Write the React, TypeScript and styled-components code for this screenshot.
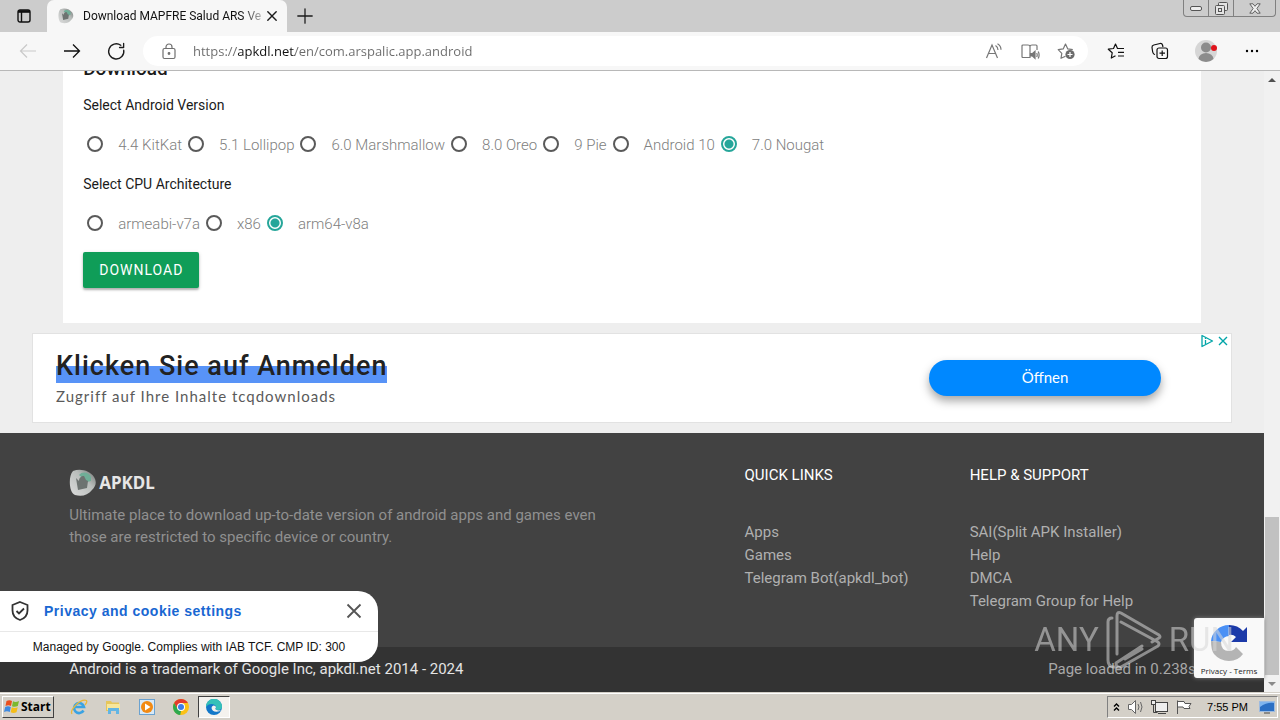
import React from "react";
import styled, { createGlobalStyle, css } from "styled-components";

const GlobalStyle = createGlobalStyle`
  *, *::before, *::after { box-sizing: border-box; }
  body { margin: 0; background: #eeeeee; font-family: Roboto, "Liberation Sans", sans-serif; font-size: 15px; }
  button, input { font-family: inherit; }
  a { color: inherit; text-decoration: none; }
  svg { flex: none; }
`;

const Desktop = styled.div`
  display: flex;
  flex-direction: column;
  height: 100vh;
  overflow: hidden;
`;

/* ---------- browser chrome ---------- */
const TitleBar = styled.header`
  display: flex;
  align-items: stretch;
  height: 32px;
  flex: none;
  background: #cccccc;
`;

const IconButton = styled.button<{ $w?: number }>`
  display: flex;
  align-items: center;
  justify-content: center;
  flex: none;
  width: ${(p) => p.$w ?? 32}px;
  padding: 0;
  border: 0;
  background: none;
  color: #1b1b1b;
`;

const Tab = styled.div`
  display: flex;
  align-items: center;
  width: 240px;
  padding: 0 6px 0 11px;
  border-radius: 7px 7px 0 0;
  background: #f7f7f7;
`;

const TabTitle = styled.span`
  flex: 1;
  margin-left: 9px;
  white-space: nowrap;
  font: 12px/16px Roboto, sans-serif;
  color: #111;
  mask-image: linear-gradient(to right, #000 88%, transparent 104%);
`;

const WindowButtons = styled.div`
  display: flex;
  align-self: flex-start;
  height: 17px;
  margin: 0 4px 0 auto;
  border: 1px solid #808080;
  border-top: 0;
  border-radius: 0 0 4px 4px;
  button + button { border-left: 1px solid #808080; }
`;

const Toolbar = styled.nav`
  display: flex;
  align-items: center;
  height: 39px;
  flex: none;
  padding: 0 6px;
  border-bottom: 1px solid #b8b8b8;
  background: #f7f7f7;
`;

const AddressBar = styled.form`
  display: flex;
  align-items: center;
  flex: 1;
  height: 30px;
  margin: 0 6px 0 5px;
  padding: 0 4px 0 9px;
  border-radius: 15px;
  background: #fff;
`;

const AddressInput = styled.input`
  flex: 1;
  min-width: 0;
  padding: 0;
  margin-left: 7px;
  border: 0;
  outline: 0;
  font: 13px/20px "Open Sans", sans-serif;
  color: #666;
  background: linear-gradient(to right, #6b6b6b 45px, #111 45px, #111 102px, #6b6b6b 102px);
  background-clip: text;
  -webkit-text-fill-color: transparent;
`;

/* ---------- page ---------- */
const Viewport = styled.div`
  position: relative;
  display: flex;
  flex: 1;
  min-height: 0;
`;

const Page = styled.div`
  display: flex;
  flex-direction: column;
  justify-content: flex-end;
  flex: 1;
  min-width: 0;
  overflow: hidden;
  background: #eeeeee;
`;

const Card = styled.main`
  width: 90%;
  flex: none;
  margin: 0 auto 10px;
  padding: 20px 20px 35px;
  background: #fff;
`;

const Heading = styled.h2`
  margin: 0 0 13px;
  font-size: 19px;
  line-height: 24px;
  font-weight: 500;
  color: #1b1b1b;
`;

const Group = styled.fieldset`
  margin: 0;
  padding: 0;
  border: 0;
`;

const Legend = styled.legend`
  padding: 0;
  font-size: 14px;
  line-height: 22px;
  color: #1b1b1b;
`;

const Options = styled.div`
  display: flex;
  flex-wrap: wrap;
  gap: 2px;
  padding: 16px 0 14px;
`;

const Option = styled.label`
  display: flex;
  align-items: flex-start;
  gap: 15px;
  padding-left: 4px;
  line-height: 27px;
  font-size: 15px;
  font-weight: 300;
  color: #808080;
`;

const Radio = styled.input`
  appearance: none;
  flex: none;
  width: 16px;
  height: 16px;
  margin: 4px 0 0;
  border: 2px solid #5a5a5a;
  border-radius: 50%;
  background: #fff;
  &:checked {
    border-color: #26a69a;
    background: radial-gradient(circle, #26a69a 4px, #fff 5px);
  }
`;

const DownloadButton = styled.button`
  display: block;
  height: 36px;
  padding: 0 16px;
  border: 0;
  border-radius: 2px;
  background: #0f9d58;
  box-shadow: 0 2px 2px rgba(0, 0, 0, 0.24), 0 1px 4px rgba(0, 0, 0, 0.14);
  color: #fff;
  font-size: 14px;
  letter-spacing: 1px;
`;

const Ad = styled.aside`
  position: relative;
  display: flex;
  align-items: center;
  justify-content: space-between;
  flex: none;
  width: 95%;
  max-width: 1200px;
  height: 90px;
  margin: 0 auto 10px;
  padding: 0 70px 0 23px;
  border: 1px solid #e2e2e2;
  background: #fff;
`;

const AdTitle = styled.a`
  display: block;
  width: fit-content;
  height: 34px;
  font-size: 27px;
  line-height: 34px;
  font-weight: 500;
  letter-spacing: 1px;
  color: #222;
  background: linear-gradient(transparent 17px, #5893f7 17px);
`;

const AdText = styled.p`
  margin: 2px 0 0;
  padding-bottom: 1px;
  font: 15px/22px Lato, sans-serif;
  letter-spacing: 1px;
  color: #5a5a5a;
`;

const AdButton = styled.button`
  width: 232px;
  height: 36px;
  padding: 0 0 2px;
  border: 0;
  border-radius: 18px;
  background: #0088ff;
  box-shadow: 0 5px 10px rgba(0, 0, 0, 0.35);
  color: #fff;
  font: 15px/20px Lato, sans-serif;
`;

const AdChoices = styled.div`
  position: absolute;
  top: 0;
  right: 0;
  display: flex;
`;

const Footer = styled.footer`
  flex: none;
  background: #424242;
  color: #b0b0b0;
`;

const FooterGrid = styled.div`
  display: grid;
  grid-template-columns: 3fr 1fr 1fr;
  width: 90%;
  margin: 0 auto;
  padding: 31px 6px 34px;
`;

const Logo = styled.div`
  display: flex;
  align-items: center;
  gap: 2px;
  margin-top: 5px;
  color: #e6e6e6;
  font: 700 17px/28px "Noto Sans", sans-serif;
`;

const Tagline = styled.p`
  max-width: 540px;
  margin: 7px 0 0;
  line-height: 22px;
  color: #909090;
`;

const FooterHeading = styled.h5`
  margin: 0 0 34px;
  font-size: 15px;
  line-height: 23px;
  font-weight: 400;
  color: #fff;
`;

const LinkList = styled.ul`
  margin: 0;
  padding: 0;
  list-style: none;
  line-height: 23px;
  white-space: nowrap;
`;

const Copyright = styled.div`
  background: #333333;
  color: #e4e4e4;
`;

const CopyrightRow = styled.div`
  display: flex;
  justify-content: space-between;
  width: 90%;
  margin: 0 auto;
  padding: 11px 5px 12px 6px;
  line-height: 22px;
  span + span { color: #a8a8a8; }
`;

const Scrollbar = styled.div`
  display: flex;
  flex-direction: column;
  flex: none;
  width: 16px;
  background: #f1f1f1;
`;

const ScrollTrack = styled.div`
  display: flex;
  flex-direction: column;
  justify-content: flex-end;
  flex: 1;
`;

const ScrollThumb = styled.div`
  height: 27%;
  margin: 0 1px;
  background: #c1c1c1;
`;

/* ---------- overlays ---------- */
const CookiePanel = styled.section`
  position: absolute;
  left: 0;
  bottom: 30px;
  width: 378px;
  border-radius: 0 20px 20px 0;
  background: #fff;
  color: #111;
`;

const CookieHead = styled.div`
  display: flex;
  align-items: center;
  gap: 14px;
  height: 41px;
  padding: 0 8px 0 10px;
  border-bottom: 1px solid #e8e8e8;
  a { flex: 1; font: 700 14px/20px "Liberation Sans", sans-serif; letter-spacing: 0.5px; color: #1967d2; }
`;

const CookieNote = styled.p`
  margin: 0;
  text-align: center;
  font: 12px/30px "Liberation Sans", sans-serif;
`;

const Captcha = styled.div`
  position: absolute;
  right: 16px;
  bottom: 14px;
  display: flex;
  flex-direction: column;
  align-items: center;
  width: 70px;
  height: 60px;
  padding-top: 5px;
  border-radius: 3px 0 0 3px;
  background: #f9f9f9;
  box-shadow: 0 0 4px #808080;
  color: #222;
  font: 8px/16px "Open Sans", sans-serif;
  white-space: nowrap;
`;

const Watermark = styled.div`
  position: absolute;
  right: 46px;
  bottom: 22px;
  display: flex;
  align-items: center;
  gap: 7px;
  opacity: 0.55;
  color: #d8d8d8;
  font: 33px/60px Roboto, sans-serif;
`;

/* ---------- taskbar ---------- */
const Taskbar = styled.footer`
  display: flex;
  align-items: center;
  flex: none;
  height: 28px;
  padding: 0 2px;
  border-top: 1px solid #d4d0c8;
  box-shadow: inset 0 1px #fff;
  background: #d4d0c8;
`;

const raised = css`
  border: 1px solid;
  border-color: #fff #404040 #404040 #fff;
`;
const sunken = css`
  border: 1px solid;
  border-color: #808080 #fff #fff #808080;
`;

const StartButton = styled.button`
  ${raised}
  display: flex;
  align-items: center;
  gap: 1px;
  width: 52px;
  height: 22px;
  margin-right: 8px;
  padding: 0 1px;
  background: #d4d0c8;
  color: #000;
  font: 700 12px/16px "Open Sans", sans-serif;
`;

const Launcher = styled.button<{ $active?: boolean }>`
  display: flex;
  align-items: center;
  justify-content: center;
  width: 34px;
  height: 22px;
  padding: 0;
  border: 0;
  background: none;
  ${(p) => p.$active && css`${sunken} width: 32px; background: #f4f2ee; border-color: #404040 #fff #fff #404040;`}
`;

const Tray = styled.div`
  ${sunken}
  display: flex;
  align-items: center;
  gap: 6px;
  height: 22px;
  margin-left: auto;
  padding: 0 2px 0 4px;
  color: #000;
  font: 11px/16px "Liberation Sans", sans-serif;
  time { margin: 0 5px 0 8px; }
`;

const versions = ["4.4 KitKat", "5.1 Lollipop", "6.0 Marshmallow", "8.0 Oreo", "9 Pie", "Android 10", "7.0 Nougat"];
const archs = ["armeabi-v7a", "x86", "arm64-v8a"];

const Line = ({ size = 20, w = 1.2, children }: { size?: number; w?: number; children: React.ReactNode }) => (
  <svg width={size} height={size} viewBox="0 0 20 20" fill="none" stroke="currentColor" strokeWidth={w} strokeLinecap="round" strokeLinejoin="round" aria-hidden>
    {children}
  </svg>
);

const AppMark = ({ size }: { size: number }) => (
  <svg width={size} height={size} viewBox="0 0 28 28" aria-hidden>
    <defs>
      <linearGradient id="mark" x1="0" y1="1" x2="1" y2="0">
        <stop offset="0" stopColor="#dcdcdc" />
        <stop offset="0.6" stopColor="#b9bdbb" />
        <stop offset="1" stopColor="#6f7472" />
      </linearGradient>
    </defs>
    <path d="M4 2 C12-1 21 2 25 8 C28 13 27 17 23 21 C19 26 13 28 6 26 C0 24-1 7 4 2Z" fill="url(#mark)" />
    <path d="M10 6 C13 2 20 3 22 8 L22 12 L18 13 Z" fill="#6fae97" />
    <path d="M7 9 L10 12 C10 9 12 7 15 7 L17 11 L19 12 L18 19 L9 21 Z" fill="#6d7371" />
  </svg>
);

const RadioRow = ({ name, items, picked }: { name: string; items: string[]; picked: string }) => (
  <Options>
    {items.map((t) => (
      <Option key={t}>
        <Radio type="radio" name={name} value={t} defaultChecked={t === picked} />
        {t}
      </Option>
    ))}
  </Options>
);

const LinkColumn = ({ title, links }: { title: string; links: string[] }) => (
  <div>
    <FooterHeading>{title}</FooterHeading>
    <LinkList>
      {links.map((l) => (
        <li key={l}><a href="#">{l}</a></li>
      ))}
    </LinkList>
  </div>
);

const BrowserChrome = () => (
  <>
    <TitleBar>
      <IconButton $w={47} aria-label="Tab actions">
        <svg width="14" height="14" viewBox="0 0 14 14"><rect x="1" y="1" width="12" height="12" rx="2" fill="none" stroke="#111" strokeWidth="1.4" /><path d="M1 2.500h12" stroke="#111" strokeWidth="2.600" /><path d="M4.500 3v10" stroke="#111" strokeWidth="1.400" /></svg>
      </IconButton>
      <Tab>
        <AppMark size={16} />
        <TabTitle>Download MAPFRE Salud ARS Ve</TabTitle>
        <IconButton $w={18} aria-label="Close tab"><Line size={14} w={2}><path d="M4 4l12 12M16 4L4 16" /></Line></IconButton>
      </Tab>
      <IconButton $w={36} aria-label="New tab"><Line size={16} w={1.6}><path d="M10 1v18M1 10h18" /></Line></IconButton>
      <WindowButtons>
        <IconButton $w={24} aria-label="Minimize"><svg width="12" height="5"><rect x=".5" y=".5" width="11" height="4" rx="1.5" fill="#eee" stroke="#555" /></svg></IconButton>
        <IconButton $w={25} aria-label="Restore"><svg width="13" height="13" fill="#e4e4e4" stroke="#555"><rect x="3.5" y=".5" width="9" height="8" rx="1" /><rect x=".5" y="3.500" width="9" height="9" rx="1" /><rect x="3.500" y="6.500" width="3" height="3" /></svg></IconButton>
        <IconButton $w={42} aria-label="Close"><svg width="12" height="11" viewBox="0 0 12 11" fill="#eee" stroke="#555" strokeWidth=".9"><path d="M.8.8H4L6 3.300 8 .8h3.200L7.900 5.500l3.300 4.700H8L6 7.700 4 10.200H.8L4.100 5.500Z" /></svg></IconButton>
      </WindowButtons>
    </TitleBar>
    <Toolbar aria-label="Browser">
      <IconButton $w={44} aria-label="Back"><svg width="18" height="16" fill="none" stroke="#c9c9c9" strokeWidth="1.200"><path d="M17 8H1.500M8 1.500L1.500 8L8 14.500" /></svg></IconButton>
      <IconButton $w={44} aria-label="Forward"><svg width="18" height="16" fill="none" stroke="#111" strokeWidth="1.300"><path d="M1 8h15.500M10 1.500L16.500 8L10 14.500" /></svg></IconButton>
      <IconButton $w={44} aria-label="Refresh"><Line size={19} w={1.4}><path d="M17.600 8.500A8 8 0 1 1 14.500 3.500M17.500 1.500v4.300h-4.300" /></Line></IconButton>
      <AddressBar onSubmit={(e) => e.preventDefault()}>
        <IconButton type="button" $w={34} aria-label="Site information">
          <svg width="14" height="17" fill="none" stroke="#707070" strokeWidth="1.200"><rect x="1" y="5.500" width="12" height="10" rx="1.500" /><path d="M4 5.500V4a3 3 0 0 1 6 0v1.500" /><circle cx="7" cy="10.500" r=".8" fill="#707070" /></svg>
        </IconButton>
        <AddressInput aria-label="Address" defaultValue="https://apkdl.net/en/com.arspalic.app.android" />
        <IconButton type="button" $w={36} aria-label="Read aloud">
          <svg width="18" height="17" fill="none" stroke="#777" strokeWidth="1.200"><path d="M1.500 15L7 2l5.500 13M3.500 10.500h7M10.500 2.500q2.500 1.500 2.500 4.500M12.500 .8q3.500 2 3.500 6" /></svg>
        </IconButton>
        <IconButton type="button" $w={36} aria-label="Immersive reader">
          <svg width="19" height="17" fill="none" stroke="#777" strokeWidth="1.200"><path d="M9 3v11.500H2q-1 0-1-1V3q0-1 1-1h5q2 0 2 1.500Q9 2 11 2h4q1 0 1 1v4" /><path d="M9.500 10.500h2l2.500-2.200v7L11.500 13h-2z" fill="#777" /><path d="M15.700 10q1 2 0 4M17.200 8.500q1.800 3.300 0 7" /></svg>
        </IconButton>
        <IconButton type="button" $w={36} aria-label="Add to favorites">
          <svg width="19" height="18" fill="none" stroke="#777" strokeWidth="1.200" strokeLinejoin="round"><path d="M8.500 14.200L4 16.300l.8-5L1.200 7.700l5-.8L8.500 2l2.300 4.900 5 .8" /><circle cx="13" cy="12.500" r="4.600" fill="#6b6b6b" stroke="none" /><path d="M13 10v5M10.500 12.500h5" stroke="#fff" /></svg>
        </IconButton>
      </AddressBar>
      <IconButton $w={44} aria-label="Favorites"><svg width="18" height="18" fill="none" stroke="#111" strokeWidth="1.200" strokeLinejoin="round"><path d="M8.500 13.800L4.300 16l.9-5.200L1.300 7.200l5.200-.7L8.500 2l2 4.500H17M11 10.300h6M11 14h6" /></svg></IconButton>
      <IconButton $w={44} aria-label="Collections"><svg width="18" height="18" fill="none" stroke="#111" strokeWidth="1.200"><path d="M4 12.500l-.8-.3Q2 11.500 1.700 10L1 5.500Q.8 3.500 2.800 3L9 1.500q2-.3 2.500 1.500l.5 2" /><rect x="6" y="6" width="10.500" height="10.500" rx="2" /><path d="M11.200 8.500v5.500M8.500 11.200H14" /></svg></IconButton>
      <IconButton $w={48} aria-label="Profile"><svg width="22" height="24"><circle cx="11" cy="12" r="11" fill="#d6d6d6" /><circle cx="11" cy="8.500" r="5" fill="#8c8c8c" /><path d="M3.500 20a7.500 6 0 0 1 15 0A11 11 0 0 1 3.500 20Z" fill="#8c8c8c" /><circle cx="19" cy="9" r="3" fill="#e0141c" /></svg></IconButton>
      <IconButton $w={44} aria-label="Menu"><svg width="14" height="4"><circle cx="2" cy="2" r="1.200" /><circle cx="7" cy="2" r="1.200" /><circle cx="12" cy="2" r="1.200" /></svg></IconButton>
    </Toolbar>
  </>
);

export default function App() {
  return (
    <Desktop>
      <GlobalStyle />
      <BrowserChrome />
      <Viewport>
        <Page>
          <Card>
            <Heading>Download</Heading>
            <Group>
              <Legend>Select Android Version</Legend>
              <RadioRow name="version" items={versions} picked="7.0 Nougat" />
            </Group>
            <Group>
              <Legend>Select CPU Architecture</Legend>
              <RadioRow name="arch" items={archs} picked="arm64-v8a" />
            </Group>
            <DownloadButton>DOWNLOAD</DownloadButton>
          </Card>
          <Ad>
            <div>
              <AdTitle href="#">Klicken Sie auf Anmelden</AdTitle>
              <AdText>Zugriff auf Ihre Inhalte tcqdownloads</AdText>
            </div>
            <AdButton>Öffnen</AdButton>
            <AdChoices>
              <IconButton $w={16} aria-label="Ad information"><svg width="14" height="14" fill="none" stroke="#00a5a8" strokeWidth="1.300" strokeLinejoin="round"><path d="M2 1.500v11L12.500 7Z" /><path d="M5.500 4v1M5.500 6v4" /></svg></IconButton>
              <IconButton $w={16} aria-label="Close ad"><svg width="10" height="14" stroke="#00a5a8" strokeWidth="1.400"><path d="M1 3l8 8M9 3l-8 8" /></svg></IconButton>
            </AdChoices>
          </Ad>
          <Footer>
            <FooterGrid>
              <div>
                <Logo><AppMark size={28} />APKDL</Logo>
                <Tagline>Ultimate place to download up-to-date version of android apps and games even those are restricted to specific device or country.</Tagline>
              </div>
              <LinkColumn title="QUICK LINKS" links={["Apps", "Games", "Telegram Bot(apkdl_bot)"]} />
              <LinkColumn title="HELP & SUPPORT" links={["SAI(Split APK Installer)", "Help", "DMCA", "Telegram Group for Help"]} />
            </FooterGrid>
            <Copyright>
              <CopyrightRow>
                <span>Android is a trademark of Google Inc, apkdl.net 2014 - 2024</span>
                <span>Page loaded in 0.238s</span>
              </CopyrightRow>
            </Copyright>
          </Footer>
        </Page>
        <Scrollbar>
          <svg width="16" height="17"><path d="M4 11l4-4 4 4z" fill="#505050" /></svg>
          <ScrollTrack><ScrollThumb /></ScrollTrack>
          <svg width="16" height="17"><path d="M4 7l4 4 4-4z" fill="#8a8a8a" /></svg>
        </Scrollbar>
        <CookiePanel>
          <CookieHead>
            <svg width="20" height="22" fill="none" stroke="#333" strokeWidth="1.800"><path d="M10 2l7.500 3v5.500c0 4.500-3 8-7.500 9.500-4.500-1.500-7.500-5-7.500-9.500V5Z" /><path d="M6.500 11l2.500 2.500 5-5" /></svg>
            <a href="#">Privacy and cookie settings</a>
            <IconButton $w={32} aria-label="Close"><svg width="16" height="16" stroke="#555" strokeWidth="1.800"><path d="M1.500 1.500l13 13M14.500 1.500l-13 13" /></svg></IconButton>
          </CookieHead>
          <CookieNote>Managed by Google. Complies with IAB TCF. CMP ID: 300</CookieNote>
        </CookiePanel>
        <Captcha>
          <svg width="40" height="40" viewBox="0 0 40 40">
            <path d="M20 2A18 18 0 0 0 2 18L12 19a9 9 0 0 1 8-6Z" fill="#4a90f5" />
            <path d="M20 2q9 0 14 6l4-4v15H22l5-5q-3-3-7-2Z" fill="#1c3aa9" />
            <path d="M2 18L12 19q0 9 8 9 5 0 7-4l7 7q-5 7-14 7T5 31Q2 27 2 18Z" fill="#b4b4b4" />
          </svg>
          <div><a href="#">Privacy</a> - <a href="#">Terms</a></div>
        </Captcha>
        <Watermark>
          <span>ANY</span>
          <svg width="56" height="60" fill="none" stroke="#d8d8d8" strokeWidth="3" strokeLinejoin="round" strokeLinecap="round"><path d="M6 8q-4 0-4 4v38q0 6 5 7l4 0" /><path d="M11 44V6q0-5 4-3l38 22q2 2 0 3l-7 4M15 12l37 20q2 2 0 4L15 57q-5 1-5-4l26-17M19 49l17-10" /></svg>
          <span>RUN</span>
        </Watermark>
      </Viewport>
      <Taskbar>
        <StartButton>
          <svg width="16" height="15" viewBox="0 0 16 15"><path d="M2.500 2q3-1.500 5.500 0L7 7Q4.500 5.500 1.500 7Z" fill="#ea4f1d" /><path d="M9 2.300q2.500 1.300 6-.3l-1.200 5Q11 8.500 8 7.300Z" fill="#7cb82f" /><path d="M1.200 8Q4 6.700 6.800 8l-1 5Q3 11.700 0 13Z" fill="#3f8ae0" /><path d="M7.800 8.300q3 1.300 5.900-.1l-1.200 5q-3 1.500-5.800.1Z" fill="#f5bd18" /></svg>
          Start
        </StartButton>
        <Launcher aria-label="Internet Explorer">
          <svg width="18" height="18" fill="none"><path d="M13.500 12.500A5 5 0 1 1 14 9H5" stroke="#3aa3e3" strokeWidth="2.600" /><path d="M2 16Q0 13 6 7T16.500 2.500Q17.500 4 15 7" stroke="#e9b83a" strokeWidth="1.300" /></svg>
        </Launcher>
        <Launcher aria-label="Explorer">
          <svg width="18" height="18"><path d="M2 3h5l1 1.500h7V13H2Z" fill="#e6c65c" /><path d="M3 6h13v6H3Z" fill="#f7e69b" /><path d="M4 10h11v6h-3v-3H7v3H4Z" fill="#62b5e4" /></svg>
        </Launcher>
        <Launcher aria-label="Media Player">
          <svg width="18" height="18"><rect x="1.500" y="1.500" width="15" height="15" fill="#d8e9f7" stroke="#6ba2d0" /><circle cx="9" cy="9" r="6" fill="#f28a13" /><path d="M7 5.500L12.500 9 7 12.500Z" fill="#fff" /></svg>
        </Launcher>
        <Launcher aria-label="Chrome">
          <svg width="16" height="16" viewBox="0 0 16 16"><circle cx="8" cy="8" r="8" fill="#fbc116" /><path d="M1.100 4A8 8 0 0 1 14.900 4H8L4.500 10Z" fill="#e33b2e" /><path d="M1.100 4L4.600 10 8 12 7.200 16A8 8 0 0 1 1.100 4Z" fill="#2da94f" /><circle cx="8" cy="8" r="4" fill="#fff" /><circle cx="8" cy="8" r="3" fill="#3d7de8" /></svg>
        </Launcher>
        <Launcher $active aria-label="Edge">
          <svg width="16" height="16" viewBox="0 0 16 16"><circle cx="8" cy="8" r="8" fill="#1277c9" /><path d="M0 8A8 8 0 0 1 16 7.500Q16 11 12 11q-2.500 0-2.500-1.200Q10.500 9 10 7.500 9 5 5.500 5 2 5 0 8Z" fill="#35c1b8" /><path d="M5.500 9Q5.500 7 7.500 6.500 10 6.500 10 8.500q-1.500 1.200 0 2.300 3 1.200 5.500 0-2 2-5 2-4.500-.3-5-3.800Z" fill="#f4f2ee" /></svg>
        </Launcher>
        <Tray>
          <svg width="9" height="10" fill="none" stroke="#000" strokeWidth="1.400"><path d="M2 4.500l2.500-2.500L7 4.500M2 8.500L4.500 6 7 8.500" /></svg>
          <svg width="18" height="16" fill="#fff" stroke="#666"><path d="M1.500 5.500h3l4-4v13l-4-4h-3Z" /><path d="M11 5q2 3 0 6M13.500 3q3 5 0 10" fill="none" /></svg>
          <svg width="18" height="16" fill="#eee" stroke="#444"><rect x="4.500" y="3.500" width="12" height="9" /><path d="M7 14.500h8M2.500 5.500v8h4" fill="none" /><rect x=".5" y="1.500" width="4" height="4" /></svg>
          <svg width="18" height="16" fill="#fff" stroke="#555"><path d="M2.500 15V1.500M3 2.500h6l1 2h6l-2 3 1 2H9l-1-1.500H3" /></svg>
          <time>7:55 PM</time>
          <svg width="16" height="14"><rect x=".5" y="1.500" width="15" height="10" fill="#2b6fc4" stroke="#9dbbe0" /><path d="M1 7q7-5 14-4V2H1Z" fill="#7fb4ee" /><path d="M5 13h6" stroke="#444" /></svg>
        </Tray>
      </Taskbar>
    </Desktop>
  );
}
